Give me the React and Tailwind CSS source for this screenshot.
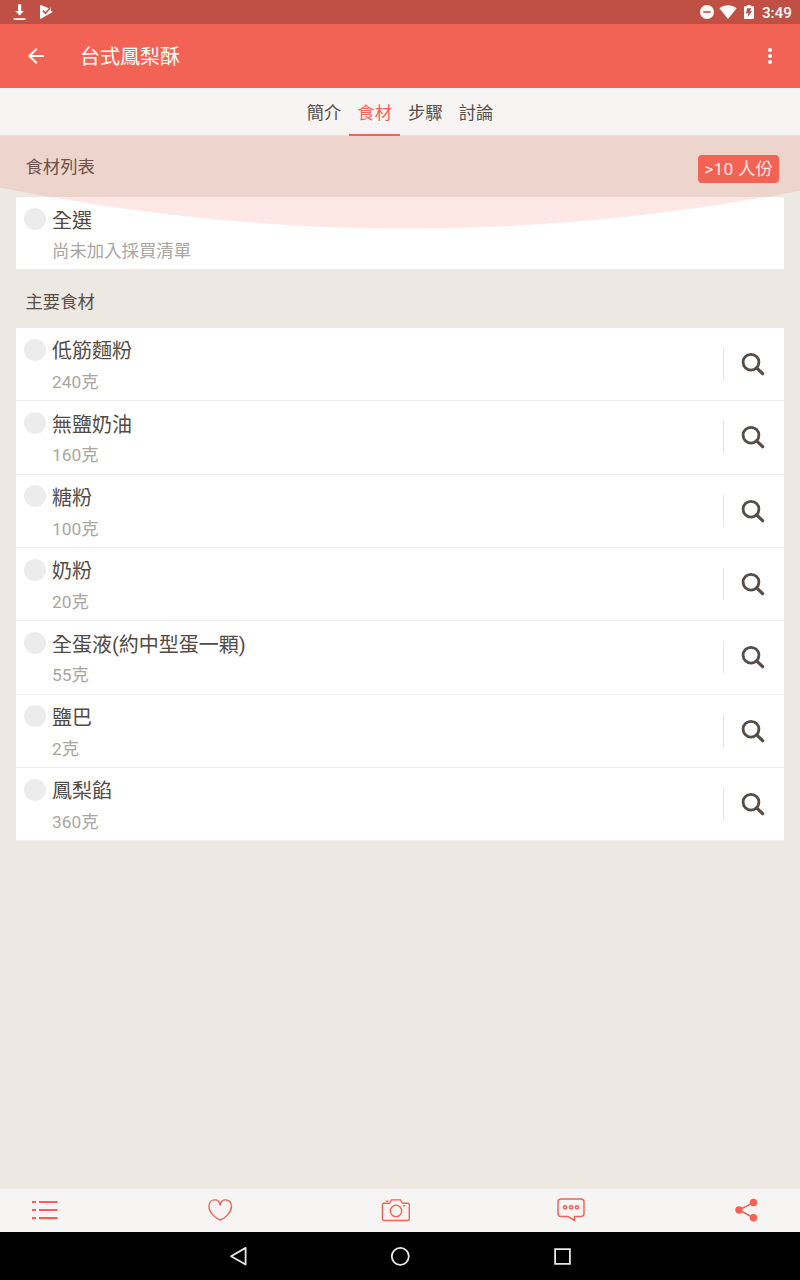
import { useState } from 'react';

const tabs = ['簡介', '食材', '步驟', '討論'];

const ingredients = [
  { name: '低筋麵粉', amount: '240克' },
  { name: '無鹽奶油', amount: '160克' },
  { name: '糖粉', amount: '100克' },
  { name: '奶粉', amount: '20克' },
  { name: '全蛋液(約中型蛋一顆)', amount: '55克' },
  { name: '鹽巴', amount: '2克' },
  { name: '鳳梨餡', amount: '360克' },
];

function StatusBar() {
  return (
    <div className="flex h-6 items-center justify-between bg-[#c05044] pl-3 pr-2 text-white">
      <div className="flex items-center gap-3">
        <svg width="15" height="18" viewBox="0 0 15 18" fill="currentColor">
          <path d="M6 1.2h3.2v6.8h2.7l-4.3 4.5L3.300 8H6zM1.700 15.200h11.800v1.700H1.700z" />
        </svg>
        <svg width="15" height="16" viewBox="0 0 15 16">
          <path d="M2 1 L10.300 4.600 11.600 3.200 L11.900 6.500 L13.600 7.900 L2 14.800 Q1 15 1 14 V1.800 Q1 .8 2 1z" fill="currentColor" />
          <path d="M3.800 6.600 6.500 9.300 11 3.900" fill="none" stroke="#c05044" strokeWidth="1.500" />
        </svg>
      </div>
      <div className="flex items-center">
        <svg width="14" height="14" viewBox="0 0 14 14">
          <circle cx="7" cy="7" r="7" fill="currentColor" />
          <path d="M3.3 7h7.4" stroke="#c05044" strokeWidth="1.6" />
        </svg>
        <svg className="ml-[5.5px]" width="18" height="14" viewBox="0 0 18 14" fill="currentColor">
          <path d="M9 14 .4 3.3C2.9 1.3 5.8 .2 9 .2s6.1 1.1 8.6 3.1z" />
        </svg>
        <svg className="ml-[7px]" width="10" height="14" viewBox="0 0 10 14">
          <path d="M3 0h4v1.3h2.2c.5 0 .8.3.8.8v11.1c0 .5-.3.8-.8.8H.8c-.5 0-.8-.3-.8-.8V2.1c0-.5.3-.8.8-.8H3z" fill="currentColor" />
          <path d="M3 3.200H7.300L5.900 6.200H8.200L3.600 12 4.300 8.200H2z" fill="#c05044" />
        </svg>
        <span className="ml-[7.5px] pt-px text-[15.3px] leading-6 font-medium">3:49</span>
      </div>
    </div>
  );
}

function AppBar() {
  return (
    <header className="flex h-16 items-center bg-[#f26355] px-6 text-white">
      <svg width="24" height="24" viewBox="0 0 24 24" fill="currentColor">
        <path d="M20 11H7.83l5.59-5.59L12 4l-8 8 8 8 1.41-1.41L7.83 13H20v-2z" />
      </svg>
      <h1 className="ml-8 flex-1 pt-0.5 text-xl">台式鳳梨酥</h1>
      <svg className="-mr-1.5" width="24" height="24" viewBox="0 0 24 24" fill="currentColor">
        <circle cx="12" cy="6" r="2" />
        <circle cx="12" cy="12" r="2" />
        <circle cx="12" cy="18" r="2" />
      </svg>
    </header>
  );
}

function SearchIcon() {
  return (
    <svg className="mr-[3px]" width="24" height="24" viewBox="0 0 24 24" fill="none" stroke="#554d47">
      <circle cx="10" cy="10.2" r="7.900" strokeWidth="2.8" />
      <path d="M15.6 15.900 21.6 21.700" strokeWidth="3.2" strokeLinecap="round" />
    </svg>
  );
}

function IngredientRow({ name, amount, search }) {
  return (
    <div className="flex h-[73.33px] items-center border-b-[1.33px] border-[#eeeeee] bg-white pl-2">
      <div className="h-full flex-1 pt-[9.5px]">
        <div className="flex items-center gap-1.5">
          <span className="mt-[-4.5px] h-[22px] w-[22px] rounded-full bg-[#ececec]" />
          <span className="text-xl leading-[29px] text-[#524a44]">{name}</span>
        </div>
        <div className="ml-7 mt-[3.5px] text-[17.33px] leading-[25px] tracking-[0.05px] text-[#aaa6a2]">{amount}</div>
      </div>
      {search && (
        <button className="flex h-8 w-[61px] items-center justify-center border-l border-[#e6e6e6]">
          <SearchIcon />
        </button>
      )}
    </div>
  );
}

function BottomBar() {
  return (
    <div className="flex h-11 items-center justify-between border-t border-[#efefee] bg-[#f7f5f3] pb-0.5 pl-[30px] pr-[39px] text-[#f26355]">
      <svg width="30" height="26" viewBox="0 0 30 26" stroke="currentColor" strokeWidth="2.2">
        <path d="M2 5h4M9 5h18.5M2 13h4M9 13h18.5M2 21.2h4M9 21.2h18.5" />
      </svg>
      <svg width="30" height="26" viewBox="0 0 30 26" fill="none" stroke="currentColor" strokeWidth="1.4">
        <path d="M15.2 8.300C14.700 5 12.700 2.900 9.800 2.900 6.300 2.900 3.900 5.500 3.900 9.200c0 6.300 6.700 12.200 11.300 13.800 4.600-1.600 11.300-7.500 11.300-13.800 0-3.700-2.400-6.300-5.900-6.300-2.900 0-4.900 2.100-5.400 5.400z" />
      </svg>
      <svg width="30" height="26" viewBox="0 0 30 26" fill="none" stroke="currentColor" strokeWidth="1.4">
        <path d="M2.800 6.300H8.300L10.600 2.900H19.400L21.600 6.300H26.800Q28.300 6.300 28.300 7.800V22Q28.300 23.500 26.800 23.500H2.800Q1.400 23.500 1.400 22V7.800Q1.400 6.300 2.800 6.300zM4.600 4.100h2.800M21.900 8.900h2" />
        <circle cx="15" cy="14" r="5.7" />
      </svg>
      <svg width="30" height="26" viewBox="0 0 30 26" fill="none" stroke="currentColor" strokeWidth="1.5">
        <path d="M5 1.900H25Q28 1.900 28 4.900V16.500Q28 19.500 25 19.500H18.500V23.400L12 19.500H5Q2 19.500 2 16.500V4.900Q2 1.900 5 1.900z" />
        <circle cx="9.1" cy="10.300" r="1.600" />
        <circle cx="15" cy="10.300" r="1.600" />
        <circle cx="20.9" cy="10.300" r="1.600" />
      </svg>
      <svg width="30" height="26" viewBox="0 0 30 26" fill="currentColor">
        <path d="M22.5 5.6 8 13l14.5 7.7" fill="none" stroke="currentColor" strokeWidth="1.6" />
        <circle cx="8" cy="13" r="3.7" />
        <circle cx="22.5" cy="5.5" r="3.7" />
        <circle cx="22.5" cy="20.7" r="3.7" />
      </svg>
    </div>
  );
}

function NavigationBar() {
  return (
    <div className="flex h-12 items-center justify-center gap-[138px] bg-black text-[#e8e8e8]">
      <svg width="24" height="24" viewBox="0 0 24 24" fill="none" stroke="currentColor" strokeWidth="1.8" strokeLinejoin="round">
        <path d="M19.6 3.9v16.6L5.1 12.2z" />
      </svg>
      <svg width="24" height="24" viewBox="0 0 24 24" fill="none" stroke="currentColor" strokeWidth="1.8">
        <circle cx="12.3" cy="12.3" r="8.5" />
      </svg>
      <svg width="24" height="24" viewBox="0 0 24 24" fill="none" stroke="currentColor" strokeWidth="1.8">
        <path d="M5.1 5.1h14.8v14.8H5.1z" />
      </svg>
    </div>
  );
}

export default function App() {
  const [activeTab, setActiveTab] = useState('食材');

  return (
    <div className="flex h-[1280px] w-[800px] flex-col overflow-hidden bg-[#ede8e1] font-['Roboto','Noto_Sans_CJK_TC',sans-serif]">
      <StatusBar />
      <AppBar />
      <nav className="flex h-12 justify-center border-b border-[#e6e4e1] bg-[#f7f5f3]">
        {tabs.map((tab) => (
          <button
            key={tab}
            onClick={() => setActiveTab(tab)}
            className={
              tab === activeTab
                ? 'h-12 w-[50.67px] border-b-2 border-[#f26355] pt-[5px] text-[17.33px] text-[#f26355]'
                : 'h-12 w-[50.67px] border-b-2 border-transparent pt-[5px] text-[17.33px] text-[#554d47]'
            }
          >
            {tab}
          </button>
        ))}
      </nav>

      <main className="relative flex-1 px-4">
        <div className="flex h-[61px] items-center justify-between pl-[9.5px] pr-[5px] text-[17.33px]">
          <h2 className="pt-0.5 text-[#554d47]">食材列表</h2>
          <span className="mt-[5px] flex h-7 items-center rounded bg-[#f26355] px-[6px] pt-0.5 tracking-[0.2px] text-white">&gt;10 人份</span>
        </div>
        <IngredientRow name="全選" amount="尚未加入採買清單" />

        <h2 className="flex h-[57.67px] items-center pl-[9.5px] pt-2 text-[17.33px] text-[#554d47]">主要食材</h2>
        {ingredients.map((item) => (
          <IngredientRow key={item.name} name={item.name} amount={item.amount} search />
        ))}

        {/* tinted arc that hangs from the tab bar */}
        <svg className="pointer-events-none absolute left-0 top-0" width="800" height="94" viewBox="0 0 800 94">
          <path d="M0 0H816V51.5Q408 133.5 0 51.5z" fill="#f26355" fillOpacity="0.15" />
        </svg>
      </main>

      <BottomBar />
      <NavigationBar />
    </div>
  );
}
